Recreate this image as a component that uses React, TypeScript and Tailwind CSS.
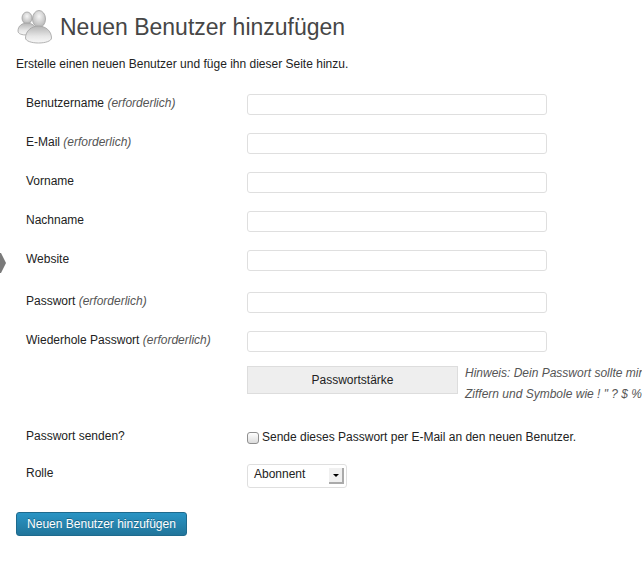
import React from "react";

const Req = () => <em className="text-[#555]"> (erforderlich)</em>;

function Row({ label, req, mb }: { label: string; req?: boolean; mb: string }) {
  return (
    <div className={`flex items-start pl-[26px] ${mb}`}>
      <label className="w-[221px] shrink-0 text-[12px] leading-[18px] text-[#222]">
        {label}
        {req && <Req />}
      </label>
      <input className="w-[300px] h-[21px] bg-white border border-[#dfdfdf] rounded-[3px] outline-none" />
    </div>
  );
}

function UsersIcon() {
  return (
    <svg width="36" height="36" viewBox="0 0 36 36" className="shrink-0">
      <defs>
        <radialGradient id="h" cx="0.5" cy="0.35" r="0.7">
          <stop offset="0" stopColor="#f6f6f6" />
          <stop offset="1" stopColor="#b0b0b0" />
        </radialGradient>
        <linearGradient id="b" x1="0" y1="0" x2="0" y2="1">
          <stop offset="0" stopColor="#b4b4b4" />
          <stop offset="0.6" stopColor="#e6e6e6" />
          <stop offset="1" stopColor="#f8f8f8" />
        </linearGradient>
      </defs>
      <ellipse cx="11" cy="9" rx="5" ry="6" fill="url(#h)" stroke="#a0a0a0" strokeWidth="0.8" />
      <path d="M2 22c0-5 4-8 9-8s9 3 9 8c0 3-4 4-9 4s-9-1-9-4z" fill="url(#b)" stroke="#a0a0a0" strokeWidth="0.8" />
      <ellipse cx="23" cy="10" rx="6.5" ry="8.5" fill="url(#h)" stroke="#a0a0a0" strokeWidth="0.8" />
      <path d="M9.5 29c0-7 6-12 13-12s13 5 13 12c0 3-6 5-13 5s-13-2-13-5z" fill="url(#b)" stroke="#a0a0a0" strokeWidth="0.8" />
    </svg>
  );
}

export default function App() {
  return (
    <div className="relative w-[642px] h-[585px] overflow-hidden bg-white font-['Liberation_Sans',Arial,sans-serif] text-[12px] text-[#222]">
      <svg width="6" height="20" viewBox="0 0 6 20" className="absolute left-0 top-[253px]">
        <path d="M0 0h1l5 10-5 10H0z" fill="#7a7a7a" />
      </svg>

      <header className="flex items-center pl-[16px] pt-[9px] gap-[8px]">
        <UsersIcon />
        <h1 className="text-[23px] leading-[34px] text-[#464646]">Neuen Benutzer hinzufügen</h1>
      </header>

      <p className="pl-[16px] mt-[9px] leading-[20px]">
        Erstelle einen neuen Benutzer und füge ihn dieser Seite hinzu.
      </p>

      <form className="mt-[20px]">
        <Row label="Benutzername" req mb="mb-[18px]" />
        <Row label="E-Mail" req mb="mb-[18px]" />
        <Row label="Vorname" mb="mb-[18px]" />
        <Row label="Nachname" mb="mb-[18px]" />
        <Row label="Website" mb="mb-[21px]" />
        <Row label="Passwort" req mb="mb-[18px]" />
        <Row label="Wiederhole Passwort" req mb="mb-[14px]" />

        <div className="flex pl-[247px]">
          <div className="w-[211px] h-[28px] shrink-0 flex items-center justify-center pb-[1px] bg-[#eeeeee] border border-[#dddddd]">
            Passwortstärke
          </div>
          <p className="ml-[7px] -mt-[3px] w-[400px] shrink-0 italic text-[#555] leading-[21px] whitespace-nowrap">
            Hinweis: Dein Passwort sollte mindestens sieben Zeichen lang sein.
            <br />
            Ziffern und Symbole wie ! " ? $ % ^ &amp; ).
          </p>
        </div>

        <div className="flex items-start pl-[26px] mt-[24px] h-[18px]">
          <span className="w-[221px] shrink-0 leading-[18px] -mt-[2px]">Passwort senden?</span>
          <span className="w-[12px] h-[12px] mt-[3px] shrink-0 rounded-[3px] border border-[#8f8f8f] bg-gradient-to-b from-white to-[#dcdcdc]" />
          <span className="ml-[3px] leading-[18px] -mt-[1px]">Sende dieses Passwort per E-Mail an den neuen Benutzer.</span>
        </div>

        <div className="flex items-start pl-[26px] mt-[18px]">
          <span className="w-[221px] shrink-0 leading-[18px] -mt-[1px]">Rolle</span>
          <div className="w-[100px] h-[24px] flex items-center justify-between pl-[6px] pr-[2px] bg-white border border-[#dfdfdf] rounded-[3px] -mt-[1px]">
            <span className="-mt-[5px]">Abonnent</span>
            <span className="w-[15px] h-[16px] flex items-center justify-center bg-[#f0f0f0] border-r-2 border-b-2 border-[#aaaaaa]">
              <span className="w-0 h-0 border-x-[3px] border-x-transparent border-t-[3px] border-t-black" />
            </span>
          </div>
        </div>

        <div className="pl-[16px] mt-[24px]">
          <button
            type="button"
            className="w-[171px] h-[24px] rounded-[3px] border border-[#1e6a8d] bg-gradient-to-b from-[#2a95c5] to-[#21759b] text-white text-[12px] [text-shadow:0_-1px_0_rgba(0,0,0,0.3)]"
          >
            Neuen Benutzer hinzufügen
          </button>
        </div>
      </form>
    </div>
  );
}
